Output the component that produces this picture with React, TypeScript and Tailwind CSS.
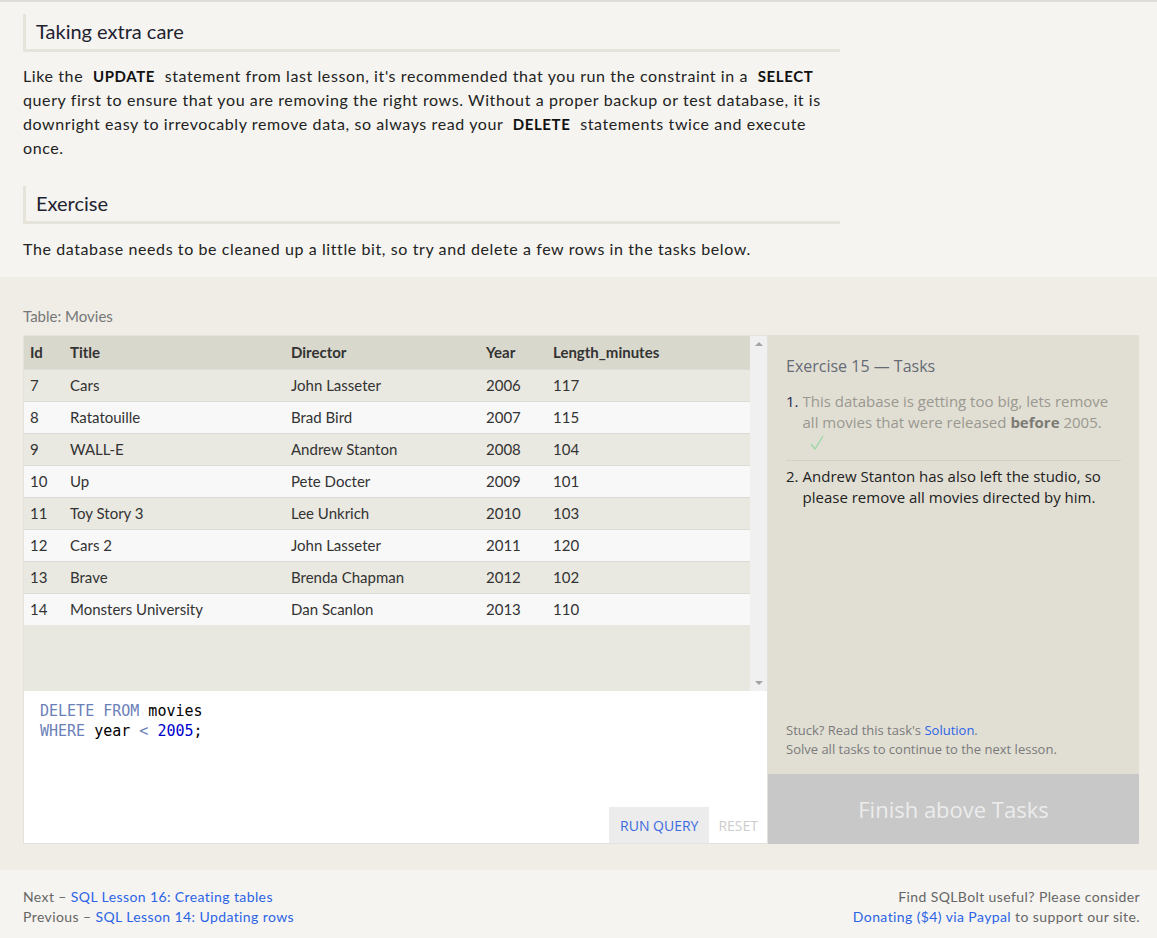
import React from 'react';

const body = { fontFamily: 'Lato, "Liberation Sans", sans-serif' };
const ui = { fontFamily: '"Open Sans", "Noto Sans", sans-serif' };

const movies = [
  [7, 'Cars', 'John Lasseter', 2006, 117],
  [8, 'Ratatouille', 'Brad Bird', 2007, 115],
  [9, 'WALL-E', 'Andrew Stanton', 2008, 104],
  [10, 'Up', 'Pete Docter', 2009, 101],
  [11, 'Toy Story 3', 'Lee Unkrich', 2010, 103],
  [12, 'Cars 2', 'John Lasseter', 2011, 120],
  [13, 'Brave', 'Brenda Chapman', 2012, 102],
  [14, 'Monsters University', 'Dan Scanlon', 2013, 110],
];

function Heading({ children }: { children: React.ReactNode }) {
  return (
    <h2 className="mr-[294px] border-b-[3px] border-l-[3px] border-[#e6e4da] pb-[5px] pl-[10px] pt-[4px] text-[20px] leading-[26px] text-[#1e2330]">
      {children}
    </h2>
  );
}

function Code({ children }: { children: React.ReactNode }) {
  return <span className="mx-[5px] text-[15px] font-bold text-[#111]">{children}</span>;
}

const cols = 'grid grid-cols-[40px_221px_195px_67px_1fr]';

export default function App() {
  return (
    <div className="min-h-[938px] border-t-2 border-[#dddcd8] bg-[#f5f4f0] text-[#222]" style={body}>
      <div className="px-[23px] pt-[12px]">
        <Heading>Taking extra care</Heading>
        <p className="mr-[294px] mt-[12px] text-[16px] leading-[24px] tracking-[0.6px]">
          Like the <Code>UPDATE</Code> statement from last lesson, it's recommended that you run the constraint in a{' '}
          <Code>SELECT</Code> query first to ensure that you are removing the right rows. Without a proper backup or
          test database, it is downright easy to irrevocably remove data, so always read your <Code>DELETE</Code>{' '}
          statements twice and execute once.
        </p>
        <div className="mt-[26px]">
          <Heading>Exercise</Heading>
        </div>
        <p className="mt-[13px] text-[16px] leading-[24px] tracking-[0.6px]">
          The database needs to be cleaned up a little bit, so try and delete a few rows in the tasks below.
        </p>
      </div>

      <section className="mt-[16px] bg-[#efede6] px-[23px] pb-[26px] pt-[29px]">
        <div className="text-[15px] leading-[20px] text-[#777]">Table: Movies</div>
        <div className="mt-[9px] flex w-[1116px]">
          <div className="flex w-[745px] flex-col border border-[#e3e2dc]">
            <div className="flex h-[355px] bg-[#e9e8e0]">
              <div className="flex-1 text-[15px] text-[#333]">
                <div className={`${cols} h-[33px] items-center bg-[#d9d8cd] pl-[6px] font-bold`}>
                  <span>Id</span>
                  <span>Title</span>
                  <span>Director</span>
                  <span>Year</span>
                  <span>Length_minutes</span>
                </div>
                {movies.map((m, i) => (
                  <div
                    key={m[0]}
                    className={`${cols} h-[32px] items-center border-t border-[#dcdcd6] pl-[6px] ${
                      i % 2 ? 'bg-[#f8f8f8]' : 'bg-[#e9e8e1]'
                    }`}
                  >
                    {m.map((v, j) => (
                      <span key={j}>{v}</span>
                    ))}
                  </div>
                ))}
              </div>
              <div className="flex w-[17px] flex-col items-center justify-between bg-[#f0f0f0] py-[6px]">
                <span className="h-0 w-0 border-x-[4px] border-b-[4px] border-x-transparent border-b-[#a3a3a3]" />
                <span className="h-0 w-0 border-x-[4px] border-t-[4px] border-x-transparent border-t-[#a3a3a3]" />
              </div>
            </div>
            <div className="relative h-[152px] bg-white">
              <pre
                className="px-[16px] pt-[10px] text-[15px] leading-[20px] text-black"
                style={{ fontFamily: '"DejaVu Sans Mono", "Liberation Mono", monospace' }}
              >
                <span className="text-[#6b7fb8]">DELETE FROM</span> movies{'\n'}
                <span className="text-[#6b7fb8]">WHERE</span> year <span className="text-[#6b7fb8]">&lt;</span>{' '}
                <span className="text-[#0000cc]">2005</span>;
              </pre>
              <div className="absolute bottom-0 right-0 flex text-[14px]" style={ui}>
                <span className="flex h-[36px] items-center bg-[#ececec] px-[11px] text-[#3b6be0]">RUN QUERY</span>
                <span className="flex h-[36px] items-center px-[9px] text-[#cccccc]">RESET</span>
              </div>
            </div>
          </div>

          <div className="flex w-[371px] flex-col bg-[#e1dfd4]" style={ui}>
            <div className="flex flex-1 flex-col px-[18px] pt-[20px]">
              <div className="text-[16px] leading-[22px] text-[#666b75]">Exercise 15 — Tasks</div>
              <ol className="mt-[14px] text-[15px] leading-[21px]">
                <li className="flex gap-[4px] border-b border-[#d3d1c6] pb-[9px]">
                  <span className="text-[#1e2a55]">1.</span>
                  <div className="text-[#9a9890]">
                    This database is getting too big, lets remove all movies that were released{' '}
                    <b className="text-[#7d7b74]">before</b> 2005.
                    <svg className="ml-[7px] mt-[2px] block" width="14" height="16" viewBox="0 0 14 16">
                      <path d="M1 9 L5 14 L13 1" fill="none" stroke="#9ed6a8" strokeWidth="1.4" />
                    </svg>
                  </div>
                </li>
                <li className="flex gap-[4px] pt-[5px] text-[#222]">
                  <span>2.</span>
                  <div>Andrew Stanton has also left the studio, so please remove all movies directed by him.</div>
                </li>
              </ol>
              <div className="mt-auto pb-[15px] text-[13px] leading-[19px] text-[#7a7a7a]">
                <div>
                  Stuck? Read this task's <span className="text-[#2c64e6]">Solution</span>.
                </div>
                <div>Solve all tasks to continue to the next lesson.</div>
              </div>
            </div>
            <div className="flex h-[70px] items-center justify-center bg-[#c8c8c8] text-[22px] text-[#ececec]">
              Finish above Tasks
            </div>
          </div>
        </div>
      </section>

      <footer className="flex justify-between pl-[23px] pr-[17px] pt-[17px] text-[14px] leading-[20px] tracking-[0.4px] text-[#666]">
        <div>
          <div>
            Next – <span className="text-[#2c64e6]">SQL Lesson 16: Creating tables</span>
          </div>
          <div>
            Previous – <span className="text-[#2c64e6]">SQL Lesson 14: Updating rows</span>
          </div>
        </div>
        <div className="text-right">
          <div>Find SQLBolt useful? Please consider</div>
          <div>
            <span className="text-[#2c64e6]">Donating ($4) via Paypal</span> to support our site.
          </div>
        </div>
      </footer>
    </div>
  );
}
